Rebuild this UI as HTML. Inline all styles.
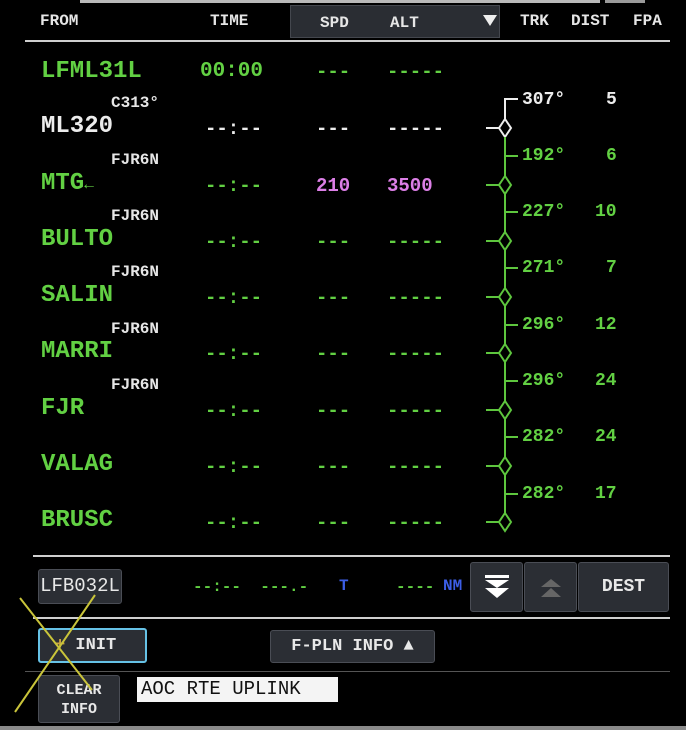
<!DOCTYPE html>
<html><head><meta charset="utf-8"><style>
body{margin:0;width:686px;height:730px;background:#000;position:relative;overflow:hidden;font-family:"Liberation Mono","DejaVu Sans Mono",monospace;font-weight:bold;}
div{position:absolute;white-space:pre;}
.g{color:#62d043}.w{color:#ececec}.m{color:#dc7fe6}.b{color:#3c5ee6}
.n{font-size:24px;line-height:24px;left:41px;letter-spacing:0px}
.t{font-size:19px;line-height:18px}
.k{font-size:18px;line-height:18px}
.a{font-size:16px;line-height:16px;left:111px;color:#e6e6e6}
.h{font-size:16px;line-height:18px;color:#e6e6e6;top:12px}
.btn{background:#2b2e34;border:1px solid #4a4d55;border-radius:3px;color:#e8e8e8;box-sizing:border-box;text-align:center}
</style></head><body>
<div style="left:80px;top:0;width:520px;height:3px;background:#b9b9b9"></div>
<div style="left:605px;top:0;width:40px;height:3px;background:#9a9a9a"></div>
<div style="left:290px;top:5px;width:210px;height:33px;background:#2a2d33;border:1px solid #44474e;box-sizing:border-box"></div>
<div class="h" style="left:40px">FROM</div>
<div class="h" style="left:210px">TIME</div>
<div class="h" style="left:320px;top:14px">SPD</div>
<div class="h" style="left:390px;top:14px">ALT</div>
<div style="left:483px;top:15px;width:0;height:0;border-left:7px solid transparent;border-right:7px solid transparent;border-top:11px solid #eee"></div>
<div class="h" style="left:520px">TRK</div>
<div class="h" style="left:571px">DIST</div>
<div class="h" style="left:633px">FPA</div>
<div style="left:25px;top:40px;width:645px;height:2px;background:#cfcfcf"></div>

<div class="n g" style="top:60px">LFML31L</div>
<div class="t g" style="left:200px;top:63px;font-size:21px">00:00</div>
<div class="t g" style="left:316px;top:63px">---</div>
<div class="t g" style="left:387px;top:63px">-----</div>

<div class="a" style="top:95px">C313°</div>
<div class="n w" style="top:115px">ML320</div>
<div class="t w" style="left:205px;top:120px">--:--</div>
<div class="t w" style="left:316px;top:120px">---</div>
<div class="t w" style="left:387px;top:120px">-----</div>

<div class="a" style="top:152px">FJR6N</div>
<div class="n g" style="top:172px">MTG<span style="font-size:16px">←</span></div>
<div class="t g" style="left:205px;top:177px">--:--</div>
<div class="t m" style="left:316px;top:177px">210</div>
<div class="t m" style="left:387px;top:177px">3500</div>

<div class="a" style="top:208px">FJR6N</div>
<div class="n g" style="top:228px">BULTO</div>
<div class="t g" style="left:205px;top:233px">--:--</div><div class="t g" style="left:316px;top:233px">---</div><div class="t g" style="left:387px;top:233px">-----</div>

<div class="a" style="top:264px">FJR6N</div>
<div class="n g" style="top:284px">SALIN</div>
<div class="t g" style="left:205px;top:289px">--:--</div><div class="t g" style="left:316px;top:289px">---</div><div class="t g" style="left:387px;top:289px">-----</div>

<div class="a" style="top:321px">FJR6N</div>
<div class="n g" style="top:340px">MARRI</div>
<div class="t g" style="left:205px;top:345px">--:--</div><div class="t g" style="left:316px;top:345px">---</div><div class="t g" style="left:387px;top:345px">-----</div>

<div class="a" style="top:377px">FJR6N</div>
<div class="n g" style="top:397px">FJR</div>
<div class="t g" style="left:205px;top:402px">--:--</div><div class="t g" style="left:316px;top:402px">---</div><div class="t g" style="left:387px;top:402px">-----</div>

<div class="n g" style="top:453px">VALAG</div>
<div class="t g" style="left:205px;top:458px">--:--</div><div class="t g" style="left:316px;top:458px">---</div><div class="t g" style="left:387px;top:458px">-----</div>

<div class="n g" style="top:509px">BRUSC</div>
<div class="t g" style="left:205px;top:514px">--:--</div><div class="t g" style="left:316px;top:514px">---</div><div class="t g" style="left:387px;top:514px">-----</div>

<svg style="position:absolute;left:0;top:0" width="686" height="730">
<g fill="none" stroke-width="2">
<path d="M518 99H505V119M486 128H499" stroke="#eee"/>
<path d="M505 119L511 128L505 137L499 128Z" stroke="#eee"/>
<g stroke="#5ec63e">
<path d="M505 137V176M505 194V232M505 250V288M505 306V344M505 362V401M505 419V457M505 475V513"/>
<path d="M505 156H518M505 212H518M505 268H518M505 325H518M505 381H518M505 437H518M505 494H518"/>
<path d="M486 185H499M486 241H499M486 297H499M486 353H499M486 410H499M486 466H499M486 522H499"/>
<path d="M505 176L511 185L505 194L499 185Z M505 232L511 241L505 250L499 241Z M505 288L511 297L505 306L499 297Z M505 344L511 353L505 362L499 353Z M505 401L511 410L505 419L499 410Z M505 457L511 466L505 475L499 466Z M505 513L511 522L505 531L499 522Z"/>
</g></g></svg>
<div class="k w" style="left:522px;top:91px">307°</div><div class="k w" style="left:606px;top:91px">5</div>
<div class="k g" style="left:522px;top:147px">192°</div><div class="k g" style="left:606px;top:147px">6</div>
<div class="k g" style="left:522px;top:203px">227°</div><div class="k g" style="left:595px;top:203px">10</div>
<div class="k g" style="left:522px;top:259px">271°</div><div class="k g" style="left:606px;top:259px">7</div>
<div class="k g" style="left:522px;top:316px">296°</div><div class="k g" style="left:595px;top:316px">12</div>
<div class="k g" style="left:522px;top:372px">296°</div><div class="k g" style="left:595px;top:372px">24</div>
<div class="k g" style="left:522px;top:428px">282°</div><div class="k g" style="left:595px;top:428px">24</div>
<div class="k g" style="left:522px;top:485px">282°</div><div class="k g" style="left:595px;top:485px">17</div>

<div style="left:33px;top:555px;width:637px;height:2px;background:#cfcfcf"></div>
<div class="btn" style="left:38px;top:569px;width:84px;height:35px;font-size:19px;line-height:33px;font-weight:normal">LFB032L</div>
<div class="g" style="left:193px;top:578px;font-size:16px;line-height:18px">--:--  ---.-</div>
<div class="b" style="left:339px;top:577px;font-size:16px;line-height:18px">T</div>
<div class="g" style="left:396px;top:578px;font-size:16px;line-height:18px">----</div>
<div class="b" style="left:443px;top:577px;font-size:16px;line-height:18px">NM</div>
<div class="btn" style="left:470px;top:562px;width:53px;height:50px"></div>
<svg style="position:absolute;left:484px;top:574px" width="26" height="26"><path d="M1 1H25V4H1Z M1 6L13 14L25 6Z M1 14L13 24L25 14Z" fill="#fff"/></svg>
<div class="btn" style="left:524px;top:562px;width:53px;height:50px"></div>
<svg style="position:absolute;left:538px;top:576px" width="26" height="24"><path d="M3 11L13 3L23 11Z M3 21L13 12L23 21Z" fill="#666"/></svg>
<div class="btn" style="left:578px;top:562px;width:91px;height:50px;font-size:18px;line-height:48px">DEST</div>
<div style="left:33px;top:617px;width:637px;height:2px;background:#cfcfcf"></div>
<div class="btn" style="left:38px;top:628px;width:109px;height:35px;border:2px solid #66c2e6;font-size:17px;line-height:31px;text-align:left;padding-left:15px"><span style="color:#c9a340">+</span> INIT</div>
<div class="btn" style="left:270px;top:630px;width:165px;height:33px;font-size:17px;line-height:31px">F-PLN INFO ▲</div>
<div style="left:25px;top:671px;width:645px;height:1px;background:#555"></div>
<div class="btn" style="left:38px;top:675px;width:82px;height:48px;font-size:15px;line-height:19px;padding-top:5px">CLEAR
INFO</div>
<div style="left:137px;top:677px;width:201px;height:25px;background:#f4f4f4;color:#111;font-size:19px;line-height:25px;padding-left:4px;box-sizing:border-box;font-weight:normal">AOC RTE UPLINK</div>
<svg style="position:absolute;left:0;top:0" width="686" height="730"><g stroke="#c9c43a" stroke-width="2"><path d="M20 598L92 690M95 595L15 712"/></g></svg>
<div style="left:0;top:726px;width:686px;height:4px;background:#8a8a8a"></div>
</body></html>
